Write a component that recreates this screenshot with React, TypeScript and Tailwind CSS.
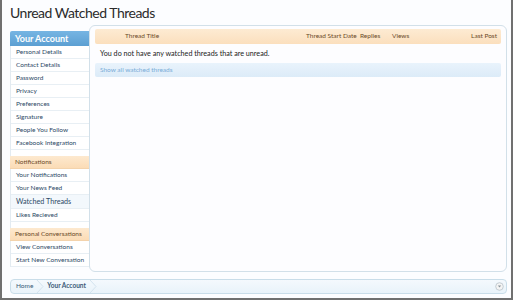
import React from "react";

const items1 = [
  "Personal Details",
  "Contact Details",
  "Password",
  "Privacy",
  "Preferences",
  "Signature",
  "People You Follow",
  "Facebook Integration",
];

function Item({ label }: { label: string }) {
  return (
    <div className="h-[13px] flex items-center pl-[5px] text-[6.5px] text-[#2d4a66] border-b border-[#e8eff4] bg-white leading-none">
      {label}
    </div>
  );
}

function SectionHead({ label }: { label: string }) {
  return (
    <div className="h-[13px] flex items-center pl-[5px] text-[6.5px] text-[#6b4a28] bg-gradient-to-b from-[#fde9cf] to-[#fbdcb6] leading-none border-b border-[#f3d3ac]">
      {label}
    </div>
  );
}

export default function App() {
  return (
    <div
      className="w-[513px] h-[300px] overflow-hidden bg-[#fcfdff] border-l-2 border-r-2 border-b-2 border-[#707070] flex flex-col"
      style={{ fontFamily: "Lato, 'Liberation Sans', sans-serif" }}
    >
      <div className="h-[25px] pl-[8px] pt-[3px] text-[14px] text-[#2b2b2b] leading-[20px] tracking-[-0.5px]">
        Unread Watched Threads
      </div>
      <div className="flex pl-[8px]">
        <div className="w-[79px] mt-[6px] flex flex-col">
          <div className="h-[15px] flex items-center pl-[5px] text-[9px] font-bold text-white bg-gradient-to-b from-[#76b5e3] to-[#5c9fd2] rounded-tl-[2px] leading-none">
            Your Account
          </div>
          <div className="border-l border-[#e3ebf1]">
            {items1.map((l) => (
              <Item key={l} label={l} />
            ))}
          </div>
          <div className="h-[6px] border-l border-[#e3ebf1] bg-white" />
          <SectionHead label="Notifications" />
          <div className="border-l border-[#e3ebf1]">
            <Item label="Your Notifications" />
            <Item label="Your News Feed" />
            <div className="h-[14px] flex items-center pl-[5px] text-[7.2px] text-[#2d4a66] bg-[#f3f8fc] border-b border-[#e8eff4] leading-none">
              Watched Threads
            </div>
            <Item label="Likes Recieved" />
          </div>
          <div className="h-[6px] border-l border-[#e3ebf1] bg-white" />
          <SectionHead label="Personal Conversations" />
          <div className="border-l border-[#e3ebf1]">
            <Item label="View Conversations" />
            <Item label="Start New Conversation" />
          </div>
        </div>
        <div className="w-[418px] h-[247px] rounded-[6px] border border-[#d2e0e9] bg-[#fdfdff] px-[5px] pt-[3px] flex flex-col">
          <div className="h-[15px] flex items-center rounded-[2px] bg-gradient-to-b from-[#fdebd3] to-[#fbdfbd] text-[6.5px] text-[#6b4a28] leading-none">
            <div className="w-[211px] pl-[30px]">Thread Title</div>
            <div className="w-[54px]">Thread Start Date</div>
            <div className="w-[32px]">Replies</div>
            <div className="w-[40px]">Views</div>
            <div className="flex-1 text-right pr-[4px]">Last Post</div>
          </div>
          <div className="h-[19px] flex items-center pl-[5px] text-[7.2px] text-[#222] leading-none">
            You do not have any watched threads that are unread.
          </div>
          <div className="h-[14px] flex items-center pl-[5px] text-[6.5px] text-[#79acd8] bg-gradient-to-b from-[#e9f3fc] to-[#dcebf8] rounded-[2px] leading-none">
            Show all watched threads
          </div>
        </div>
      </div>
      <div className="mx-[8px] mt-[7px] h-[15px] w-[497px] rounded-[4px] border border-[#c9dde9] bg-gradient-to-b from-[#f4f9fd] to-[#e9f3fa] flex items-center text-[6.5px] text-[#3b5a77] leading-none">
        <span className="pl-[5px]">Home</span>
        <svg width="9" height="13" viewBox="0 0 9 13" className="ml-[3px]">
          <polyline points="1,0 7,6.5 1,13" fill="none" stroke="#d3e3ee" strokeWidth="1" />
        </svg>
        <span className="ml-[2px] font-bold">Your Account</span>
        <svg width="9" height="13" viewBox="0 0 9 13" className="ml-[3px]">
          <polyline points="1,0 7,6.5 1,13" fill="none" stroke="#d3e3ee" strokeWidth="1" />
        </svg>
        <div className="flex-1" />
        <svg width="9" height="9" viewBox="0 0 9 9" className="mr-[2px]">
          <circle cx="4.5" cy="4.5" r="3.8" fill="#f4f4f4" stroke="#b9c3ca" strokeWidth="0.8" />
          <polygon points="2.8,3.6 6.2,3.6 4.5,5.6" fill="#8a949b" />
        </svg>
      </div>
    </div>
  );
}
